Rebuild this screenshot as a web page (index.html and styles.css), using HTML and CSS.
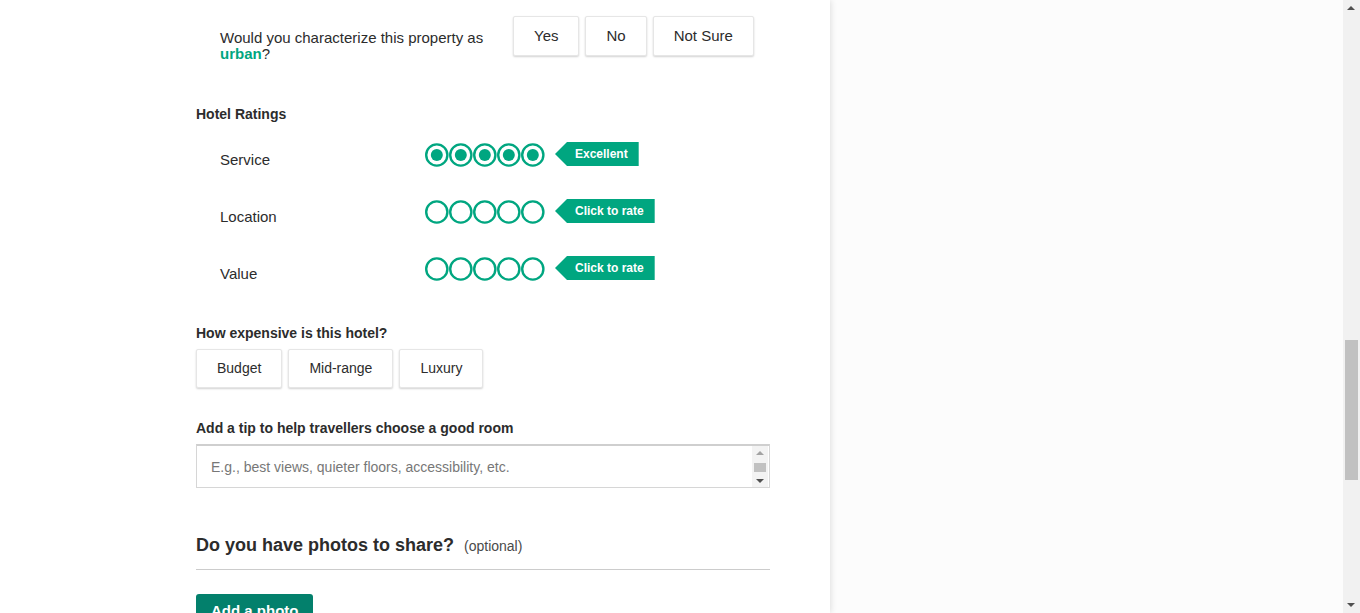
FILE: index.html
```html
<!DOCTYPE html>
<html lang="en">
<head>
<meta charset="utf-8">
<title>Write a review</title>
<link rel="stylesheet" href="styles.css">
</head>
<body>
<div class="page">
  <main class="main">
    <div class="content">
      <div class="qrow">
        <div class="qtext">Would you characterize this property as <span class="hl">urban</span>?</div>
        <div class="btns">
          <button class="btn btn-q">Yes</button>
          <button class="btn btn-q">No</button>
          <button class="btn btn-q">Not Sure</button>
        </div>
      </div>

      <h3 class="label ratings-title">Hotel Ratings</h3>

      <div class="rating-row">
        <div class="rlabel">Service</div>
        <svg class="bubbles" width="120" height="24" viewBox="0 0 120 24">
          <g fill="none" stroke="#00a680" stroke-width="2.4">
            <circle cx="11.8" cy="12" r="10.6"/><circle cx="35.8" cy="12" r="10.6"/><circle cx="59.8" cy="12" r="10.6"/><circle cx="83.8" cy="12" r="10.6"/><circle cx="107.8" cy="12" r="10.6"/>
          </g>
          <g fill="#00a680">
            <circle cx="11.8" cy="12" r="6"/><circle cx="35.8" cy="12" r="6"/><circle cx="59.8" cy="12" r="6"/><circle cx="83.8" cy="12" r="6"/><circle cx="107.8" cy="12" r="6"/>
          </g>
        </svg>
        <div class="tag">Excellent</div>
      </div>

      <div class="rating-row">
        <div class="rlabel">Location</div>
        <svg class="bubbles" width="120" height="24" viewBox="0 0 120 24">
          <g fill="none" stroke="#00a680" stroke-width="2.4">
            <circle cx="11.8" cy="12" r="10.6"/><circle cx="35.8" cy="12" r="10.6"/><circle cx="59.8" cy="12" r="10.6"/><circle cx="83.8" cy="12" r="10.6"/><circle cx="107.8" cy="12" r="10.6"/>
          </g>
        </svg>
        <div class="tag">Click to rate</div>
      </div>

      <div class="rating-row">
        <div class="rlabel">Value</div>
        <svg class="bubbles" width="120" height="24" viewBox="0 0 120 24">
          <g fill="none" stroke="#00a680" stroke-width="2.4">
            <circle cx="11.8" cy="12" r="10.6"/><circle cx="35.8" cy="12" r="10.6"/><circle cx="59.8" cy="12" r="10.6"/><circle cx="83.8" cy="12" r="10.6"/><circle cx="107.8" cy="12" r="10.6"/>
          </g>
        </svg>
        <div class="tag">Click to rate</div>
      </div>

      <h3 class="label expensive-title">How expensive is this hotel?</h3>
      <div class="btns price-btns">
        <button class="btn btn-p">Budget</button>
        <button class="btn btn-p">Mid-range</button>
        <button class="btn btn-p">Luxury</button>
      </div>

      <h3 class="label tip-title">Add a tip to help travellers choose a good room</h3>
      <div class="tipbox">
        <textarea class="tip" placeholder="E.g., best views, quieter floors, accessibility, etc."></textarea>
        <div class="tscroll">
          <span class="tarrow up"></span>
          <span class="tthumb"></span>
          <span class="tarrow down"></span>
        </div>
      </div>

      <div class="photos-head">
        <h2 class="photos-title">Do you have photos to share?</h2>
        <span class="optional">(optional)</span>
      </div>
      <button class="add-photo">Add a photo</button>
    </div>
  </main>
  <aside class="side"></aside>
</div>
<div class="scrollbar">
  <span class="sarrow sup"></span>
  <span class="sthumb"></span>
  <span class="sarrow sdown"></span>
</div>
</body>
</html>
```

FILE: styles.css
```css
html, body {
  margin: 0;
  padding: 0;
  height: 100%;
  overflow: hidden;
  background: #fcfcfc;
}

body {
  font-family: "Liberation Sans", Arial, sans-serif;
  color: #2c2c2c;
}

.page {
  display: flex;
  height: 613px;
  width: 1343px;
}

.main {
  width: 830px;
  flex: none;
  background: #fff;
  box-shadow: 1px 0 6px rgba(0, 0, 0, 0.12);
  position: relative;
  z-index: 1;
}

.side {
  flex: 1;
  background: #fcfcfc;
}

.content {
  padding-left: 196px;
  width: 574px;
}

.qrow {
  display: flex;
  align-items: flex-start;
  padding-left: 24px;
  padding-top: 16px;
}

.qtext {
  width: 293px;
  padding-top: 14px;
  font-size: 15px;
  line-height: 16px;
}

.hl {
  color: #00a680;
  font-weight: bold;
}

.btns {
  display: flex;
  gap: 6px;
}

.btn {
  font-family: inherit;
  color: #2c2c2c;
  background: #fff;
  border: 1px solid #e6e6e6;
  border-radius: 2px;
  box-shadow: 0 1px 2px rgba(0, 0, 0, 0.18);
  padding: 0 20px;
  margin: 0;
  cursor: pointer;
}

.btn-q {
  font-size: 15px;
  height: 40px;
  padding-bottom: 2px;
}

.btn-p {
  font-size: 14px;
  height: 39px;
  padding-bottom: 1px;
}

.label {
  margin: 0;
  font-size: 14px;
  font-weight: bold;
  line-height: 16px;
  color: #2c2c2c;
}

.ratings-title {
  margin-top: 44px;
  margin-bottom: 21px;
}

.rating-row {
  display: flex;
  align-items: flex-start;
  padding-left: 24px;
  height: 57px;
}

.rlabel {
  width: 205px;
  font-size: 15px;
  line-height: 18px;
  margin-top: 8px;
}

.bubbles {
  display: block;
  flex: none;
}

.tag {
  margin-left: 10px;
  margin-top: -1px;
  height: 24px;
  line-height: 24px;
  padding: 0 11px 0 20px;
  background: #00a680;
  color: #fff;
  font-size: 12px;
  font-weight: bold;
  clip-path: polygon(12px 0, 100% 0, 100% 100%, 12px 100%, 0 50%);
}

.expensive-title {
  margin-top: 11px;
  margin-bottom: 8px;
}

.tip-title {
  margin-top: 32px;
  margin-bottom: 8px;
}

.tipbox {
  position: relative;
  height: 44px;
}

.tip {
  display: block;
  box-sizing: border-box;
  width: 574px;
  height: 44px;
  margin: 0;
  padding: 12px 14px;
  border: 1px solid #d6d6d6;
  border-top: 2px solid #cfcfcf;
  font-family: inherit;
  font-size: 14px;
  line-height: 18px;
  color: #2c2c2c;
  resize: none;
  overflow: hidden;
  outline: none;
}

.tip::placeholder {
  color: #777;
}

.tscroll {
  position: absolute;
  right: 2px;
  top: 2px;
  bottom: 1px;
  width: 16px;
  background: #f3f3f3;
  display: flex;
  flex-direction: column;
  align-items: center;
  justify-content: space-between;
  padding: 5px 0 4px;
  box-sizing: border-box;
}

.tarrow {
  width: 0;
  height: 0;
  border-left: 4px solid transparent;
  border-right: 4px solid transparent;
}

.tarrow.up {
  border-bottom: 4px solid #a3a3a3;
}

.tarrow.down {
  border-top: 4px solid #505050;
}

.tthumb {
  width: 12px;
  height: 9px;
  background: #c1c1c1;
}

.photos-head {
  display: flex;
  align-items: baseline;
  margin-top: 46px;
  padding-bottom: 13px;
  border-bottom: 1px solid #cccccc;
}

.photos-title {
  margin: 0;
  font-size: 18px;
  font-weight: bold;
  line-height: 22px;
  color: #2c2c2c;
}

.optional {
  margin-left: 10px;
  font-size: 14px;
  color: #4a4a4a;
}

.add-photo {
  margin-top: 24px;
  display: block;
  height: 40px;
  padding: 0 15px;
  border: none;
  border-radius: 3px;
  background: #03806c;
  color: #fff;
  font-family: inherit;
  font-size: 15px;
  font-weight: bold;
  line-height: 34px;
  padding-bottom: 6px;
}

.scrollbar {
  position: fixed;
  top: 0;
  right: 0;
  width: 17px;
  height: 613px;
  background: #f1f1f1;
}

.sthumb {
  position: absolute;
  left: 2px;
  top: 340px;
  width: 13px;
  height: 140px;
  background: #c1c1c1;
}

.sarrow {
  position: absolute;
  left: 4px;
  width: 0;
  height: 0;
  border-left: 4px solid transparent;
  border-right: 4px solid transparent;
}

.sup {
  top: 6px;
  border-bottom: 4px solid #505050;
}

.sdown {
  bottom: 6px;
  border-top: 4px solid #505050;
}
```
